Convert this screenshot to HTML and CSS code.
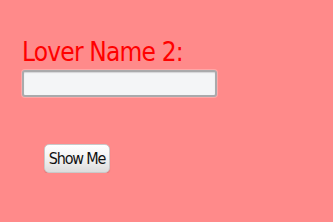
FILE: index.html
```html
<!DOCTYPE html>
<html lang="en">
<head>
    <meta charset="UTF-8">
    <title>Lover Name</title>
    <link rel="stylesheet" href="styles.css">
</head>
<body>

    <div class="love-form">
        <label class="lover-label" for="lover2">Lover Name 2:</label>
        <input class="lover-input" id="lover2" type="text">
        <button class="show-btn">Show Me</button>
    </div>

</body>
</html>
```
FILE: styles.css
```css
body {
    margin: 0;
    background-color: #ff8a8a;
    font-family: "DejaVu Sans Condensed", "DejaVu Sans", sans-serif;
}
.love-form {
    display: flex;
    flex-direction: column;
    align-items: flex-start;
    padding: 37px 0 0 22px;
}
.lover-label {
    color: #ff0000;
    font-size: 26px;
    line-height: 30px;
    letter-spacing: -0.8px;
}
.lover-input {
    box-sizing: border-box;
    width: 195px;
    height: 27px;
    margin-top: 3px;
    background: #f4f5f7;
    border: 2px solid #aaaaac;
    border-radius: 3px;
    box-shadow: inset 0 1px 1px #d4d4d6, 0 0 0 1px rgba(255, 255, 255, 0.25);
    outline: none;
}
.show-btn {
    box-sizing: border-box;
    width: 66px;
    height: 29px;
    margin: 47px 0 0 22px;
    padding: 0;
    font-family: inherit;
    font-size: 16px;
    letter-spacing: -1.2px;
    color: #111;
    background: linear-gradient(#ffffff, #f2f2f2 50%, #dcdcdc);
    border: 1px solid #c9c9c9;
    border-radius: 5px;
    box-shadow: 0 1px 1px rgba(0, 0, 0, 0.15);
}
```
